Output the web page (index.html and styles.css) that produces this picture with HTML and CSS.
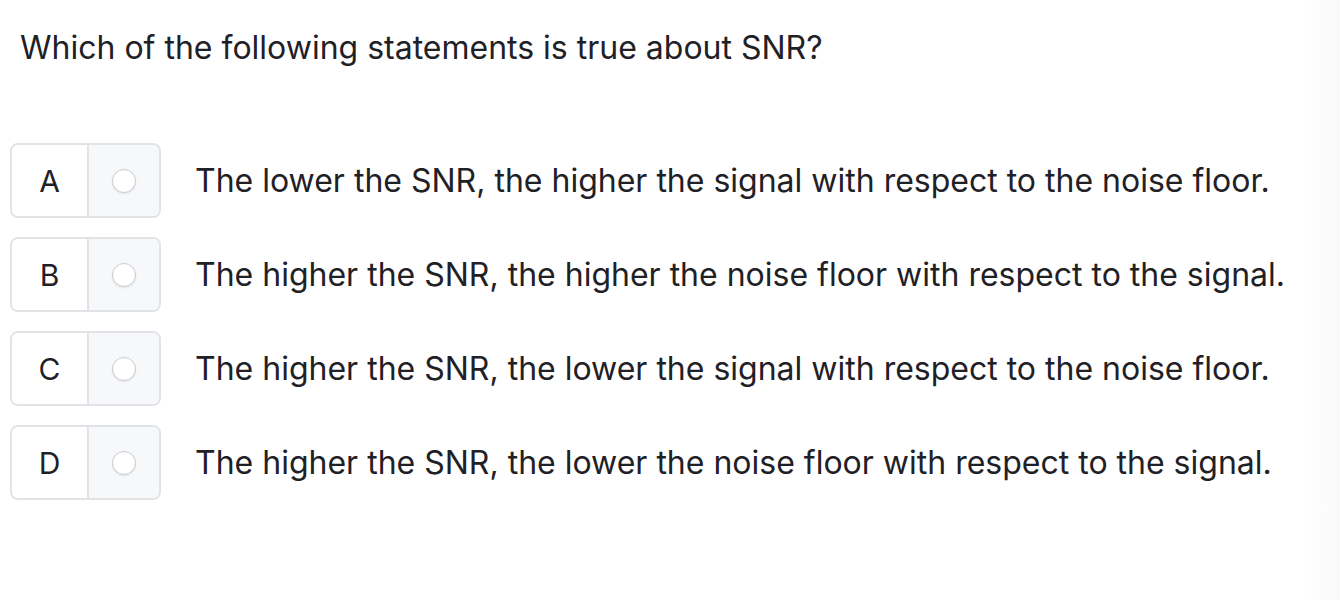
FILE: index.html
```html
<!DOCTYPE html>
<html>
<head>
<meta charset="utf-8">
<link rel="stylesheet" href="styles.css">
</head>
<body>
<div class="page">
  <h1 class="question">Which of the following statements is true about SNR?</h1>
  <div class="options">
    <div class="option">
      <div class="choice"><span class="letter">A</span><span class="radio-cell"><span class="radio"></span></span></div>
      <div class="text">The lower the SNR, the higher the signal with respect to the noise floor.</div>
    </div>
    <div class="option">
      <div class="choice"><span class="letter">B</span><span class="radio-cell"><span class="radio"></span></span></div>
      <div class="text">The higher the SNR, the higher the noise floor with respect to the signal.</div>
    </div>
    <div class="option">
      <div class="choice"><span class="letter">C</span><span class="radio-cell"><span class="radio"></span></span></div>
      <div class="text">The higher the SNR, the lower the signal with respect to the noise floor.</div>
    </div>
    <div class="option">
      <div class="choice"><span class="letter">D</span><span class="radio-cell"><span class="radio"></span></span></div>
      <div class="text">The higher the SNR, the lower the noise floor with respect to the signal.</div>
    </div>
  </div>
  <div class="edge"></div>
</div>
</body>
</html>
```

FILE: styles.css
```css
html, body {
  margin: 0;
  padding: 0;
  background: #ffffff;
}
body {
  font-family: Inter, "Liberation Sans", Arial, sans-serif;
  color: #1f2126;
}
.page {
  position: relative;
  width: 1340px;
  height: 600px;
  overflow: hidden;
}
.question {
  margin: 0;
  padding: 28px 0 0 20px;
  font-size: 32px;
  font-weight: 400;
  line-height: 40px;
}
.options {
  display: flex;
  flex-direction: column;
  gap: 19px;
  margin-top: 75px;
  padding-left: 10px;
}
.option {
  display: flex;
  align-items: center;
  gap: 34px;
}
.choice {
  display: flex;
  width: 151px;
  height: 75px;
  box-sizing: border-box;
  border: 2px solid #e1e3e7;
  border-radius: 8px;
  overflow: hidden;
}
.letter {
  width: 75px;
  display: flex;
  align-items: center;
  justify-content: center;
  font-size: 30px;
  background: #fff;
  border-right: 2px solid #e1e3e7;
}
.radio-cell {
  flex: 1;
  display: flex;
  align-items: center;
  justify-content: center;
  background: #f7f8fa;
}
.radio {
  width: 22px;
  height: 22px;
  border-radius: 50%;
  border: 1px solid #c9cbcf;
  background: #fff;
  box-shadow: 0 1px 2px rgba(0,0,0,0.08);
}
.text {
  font-size: 32px;
  line-height: 40px;
}
.edge {
  position: absolute;
  top: 0;
  right: 0;
  width: 34px;
  height: 600px;
  background: linear-gradient(to right, rgba(244,245,247,0), rgba(244,245,247,0.6));
}
```
